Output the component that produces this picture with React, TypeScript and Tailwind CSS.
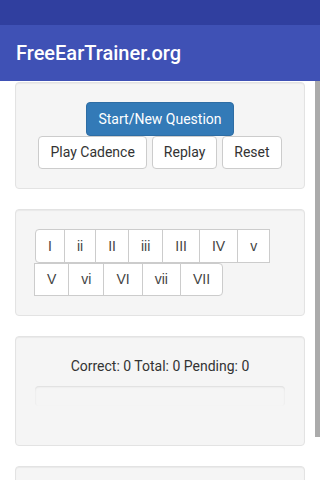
import React from "react";

const numeralsRow = ["I", "ii", "II", "iii", "III", "IV", "v", "V", "vi", "VI", "vii", "VII"];

function Well({ children }: { children: React.ReactNode }) {
  return (
    <div className="mb-[20px] rounded-[4px] border border-[#e3e3e3] bg-[#f5f5f5] p-[19px] shadow-[inset_0_1px_1px_rgba(0,0,0,0.05)]">
      {children}
    </div>
  );
}

function DefaultBtn({ label }: { label: string }) {
  return (
    <button className="h-[33.5px] rounded-[4px] border border-[#cccccc] bg-white px-[11px] text-[14px] leading-[20px] text-[#333333]">
      {label}
    </button>
  );
}

export default function App() {
  return (
    <div
      className="relative h-[480px] w-[320px] overflow-hidden bg-white"
      style={{ fontFamily: "Roboto, 'Liberation Sans', sans-serif" }}
    >
      <div className="h-[25px] bg-[#303f9f]" />
      <div className="flex h-[56px] items-center bg-[#3f51b5] px-[16px]">
        <span className="text-[20px] font-medium text-white">FreeEarTrainer.org</span>
      </div>

      <div className="px-[15px] pt-px">
        <Well>
          <div className="flex justify-center">
            <button className="h-[33.5px] rounded-[4px] border border-[#2e6da4] bg-[#337ab7] px-[11px] text-[14px] leading-[20px] text-white">
              Start/New Question
            </button>
          </div>
          <div className="flex justify-center gap-[5px]">
            <DefaultBtn label="Play Cadence" />
            <DefaultBtn label="Replay" />
            <DefaultBtn label="Reset" />
          </div>
        </Well>

        <Well>
          <div className="flex flex-wrap" style={{ fontFamily: "'Liberation Sans', Arial, sans-serif" }}>
            {numeralsRow.map((n, i) => (
              <button
                key={n}
                className={
                  "h-[33.5px] border border-[#cccccc] bg-white px-[12px] text-[14px] leading-[20px] text-[#444444] " +
                  (i === 0 ? "rounded-l-[4px]" : "-ml-px") +
                  (i === numeralsRow.length - 1 ? " rounded-r-[4px]" : "")
                }
              >
                {n}
              </button>
            ))}
          </div>
        </Well>

        <Well>
          <p className="mb-[10px] text-center text-[14px] leading-[20px] text-[#333333]">
            Correct: 0 Total: 0 Pending: 0
          </p>
          <div className="mb-[20px] h-[20px] rounded-[4px] bg-[#f5f5f5] shadow-[inset_0_1px_2px_rgba(0,0,0,0.1)]" />
        </Well>

        <Well>
          <div className="h-[40px]" />
        </Well>
      </div>

      <div className="absolute right-0 top-[81px] h-[356px] w-[5px] bg-[#ababab]" />
    </div>
  );
}
